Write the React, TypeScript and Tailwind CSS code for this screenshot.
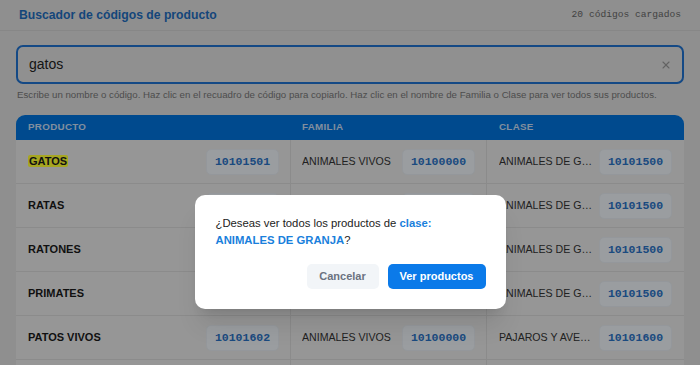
import { X } from "lucide-react";

type Row = {
  name: string;
  code: string;
  family: string;
  familyCode: string;
  cls: string;
  clsCode: string;
  hit?: boolean;
};

const rows: Row[] = [
  { name: "GATOS", code: "10101501", family: "ANIMALES VIVOS", familyCode: "10100000", cls: "ANIMALES DE GRANJA", clsCode: "10101500", hit: true },
  { name: "RATAS", code: "10101502", family: "ANIMALES VIVOS", familyCode: "10100000", cls: "ANIMALES DE GRANJA", clsCode: "10101500" },
  { name: "RATONES", code: "10101503", family: "ANIMALES VIVOS", familyCode: "10100000", cls: "ANIMALES DE GRANJA", clsCode: "10101500" },
  { name: "PRIMATES", code: "10101504", family: "ANIMALES VIVOS", familyCode: "10100000", cls: "ANIMALES DE GRANJA", clsCode: "10101500" },
  { name: "PATOS VIVOS", code: "10101602", family: "ANIMALES VIVOS", familyCode: "10100000", cls: "PAJAROS Y AVES DE CORRAL", clsCode: "10101600" },
  { name: "POLLOS VIVOS", code: "10101603", family: "ANIMALES VIVOS", familyCode: "10100000", cls: "PAJAROS Y AVES DE CORRAL", clsCode: "10101600" },
];

function Code({ value }: { value: string }) {
  return (
    <button className="h-[26px] w-[73px] shrink-0 rounded-[5px] border border-[#e3e8ee] bg-[#edf1f6] font-['Liberation_Mono',monospace] text-[11.5px] font-bold text-[#2a72c4]">
      {value}
    </button>
  );
}

function App() {
  return (
    <div className="relative h-[365px] overflow-hidden bg-[#dcdcdc] font-['Liberation_Sans',Arial,sans-serif]">
      <header className="flex h-[31px] items-center justify-between border-b border-[#cfcfcf] pl-[19px] pr-[19px]">
        <h1 className="text-[12.2px] font-bold text-[#1f6cbc]">Buscador de códigos de producto</h1>
        <span className="font-['Liberation_Mono',monospace] text-[9.6px] text-[#666]">20 códigos cargados</span>
      </header>

      <main className="px-4 pt-[14px]">
        <div className="flex h-[39px] items-center rounded-[7px] border-2 border-[#1f70cc] bg-[#dedede] pl-[11px] pr-[10px]">
          <span className="flex-1 text-[14px] text-[#222]">gatos</span>
          <X size={12} strokeWidth={2.2} className="text-[#999]" />
        </div>
        <p className="mt-[4px] whitespace-nowrap pl-px text-[9.7px] leading-[13px] text-[#777]">
          Escribe un nombre o código. Haz clic en el recuadro de código para copiarlo. Haz clic en el nombre de Familia o Clase para ver todos sus productos.
        </p>

        <div className="mt-[14px] overflow-hidden rounded-t-[9px] bg-[#e6e6e6]">
          <div className="grid h-[25px] grid-cols-[275px_196px_minmax(0,1fr)] items-center bg-[#0072da] text-[9.8px] font-bold tracking-[0.3px] text-[#c8dcf3]">
            <div className="pl-3">PRODUCTO</div>
            <div className="pl-[11px]">FAMILIA</div>
            <div className="pl-3">CLASE</div>
          </div>
          {rows.map((r) => (
            <div key={r.name} className="grid h-[44px] grid-cols-[275px_196px_minmax(0,1fr)] border-b border-[#d6d6d6]">
              <div className="flex min-w-0 items-center justify-between border-r border-[#d6d6d6] pl-3 pr-[11px]">
                <span className="text-[11px] font-bold text-[#1a1a1a]">
                  {r.hit ? <mark className="rounded-[2px] bg-[#ffff33] px-px text-[#1a1a1a]">{r.name}</mark> : r.name}
                </span>
                <Code value={r.code} />
              </div>
              <div className="flex min-w-0 items-center justify-between gap-2 border-r border-[#d6d6d6] pl-[11px] pr-[11px]">
                <span className="min-w-0 truncate text-[10.6px] text-[#333]">{r.family}</span>
                <Code value={r.familyCode} />
              </div>
              <div className="flex min-w-0 items-center justify-between gap-[5px] pl-3 pr-3">
                <span className="min-w-0 truncate text-[10.6px] text-[#333]">{r.cls}</span>
                <Code value={r.clsCode} />
              </div>
            </div>
          ))}
        </div>
      </main>

      <div className="absolute inset-0 flex justify-center bg-black/35 pt-[195px]">
        <div className="h-[114px] w-[311px] rounded-[10px] bg-white pl-[21px] pr-5 pt-[20px] shadow-xl">
          <p className="text-[11.3px] leading-[17px] text-[#222]">
            ¿Deseas ver todos los productos de <b className="text-[#1a7fdc]">clase:</b>
            <br />
            <b className="text-[#1a7fdc]">ANIMALES DE GRANJA</b>?
          </p>
          <div className="mt-[15px] flex justify-end gap-[9px]">
            <button className="h-[25px] w-[72px] rounded-[5px] bg-[#f2f5f8] text-[11px] font-bold text-[#6b7280]">Cancelar</button>
            <button className="h-[25px] w-[98px] rounded-[5px] bg-[#0b7ae9] text-[11px] font-bold text-white">Ver productos</button>
          </div>
        </div>
      </div>
    </div>
  );
}

export default App;
